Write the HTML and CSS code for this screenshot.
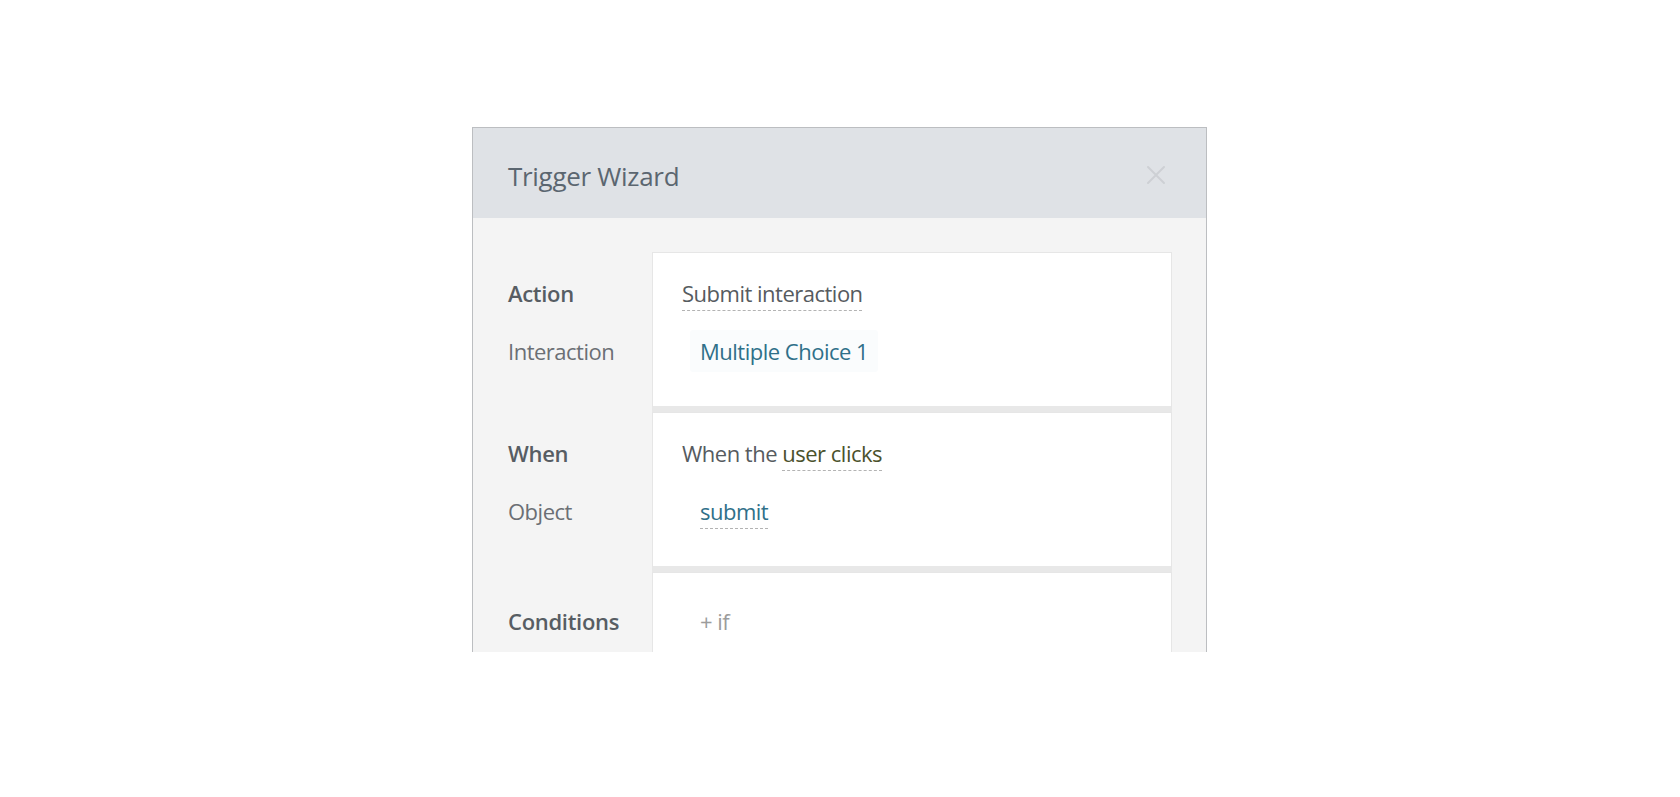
FILE: index.html
```html
<!DOCTYPE html>
<html lang="en">
<head>
<meta charset="utf-8">
<title>Trigger Wizard</title>
<link rel="stylesheet" href="styles.css">
</head>
<body>
<div class="dialog">
  <div class="dlg-header">
    <h1 class="dlg-title">Trigger Wizard</h1>
    <button class="dlg-close" aria-label="Close">
      <svg width="22" height="22" viewBox="0 0 22 22"><path d="M3 3 L19 19 M19 3 L3 19" stroke="#cdd0d4" stroke-width="2" stroke-linecap="round" fill="none"/></svg>
    </button>
  </div>
  <div class="dlg-body">
    <section class="row">
      <div class="labels">
        <div class="line label-main">Action</div>
        <div class="line label-sub">Interaction</div>
      </div>
      <div class="card">
        <div class="line"><span class="pick">Submit interaction</span></div>
        <div class="line indent"><span class="ref pill">Multiple Choice 1</span></div>
      </div>
    </section>
    <section class="row">
      <div class="labels">
        <div class="line label-main">When</div>
        <div class="line label-sub">Object</div>
      </div>
      <div class="card">
        <div class="line">When the <span class="pick event">user clicks</span></div>
        <div class="line indent"><span class="ref pick">submit</span></div>
      </div>
    </section>
    <section class="row row-cond">
      <div class="labels">
        <div class="line label-main">Conditions</div>
      </div>
      <div class="card">
        <div class="line indent"><span class="add">+ if</span></div>
      </div>
    </section>
  </div>
</div>
</body>
</html>
```
FILE: styles.css
```css
html, body {
  margin: 0;
  padding: 0;
  background: #ffffff;
}

body {
  font-family: "Open Sans", "Noto Sans", "Liberation Sans", sans-serif;
}

.dialog {
  margin: 127px 0 0 472px;
  width: 733px;
  height: 524px;
  overflow: hidden;
  border: 1px solid #bcbec1;
  border-bottom: none;
  background: #f4f4f4;
}

.dlg-header {
  height: 90px;
  background: #dfe2e6;
  display: flex;
  align-items: center;
  justify-content: space-between;
  padding: 0 39px 0 35px;
}

.dlg-title {
  margin: 0;
  padding-top: 7px;
  line-height: 83px;
  font-size: 26px;
  font-weight: 400;
  letter-spacing: -0.3px;
  color: #5b6670;
  align-self: flex-start;
}

.dlg-close {
  border: 0;
  background: none;
  padding: 0;
  margin-top: 4px;
  width: 22px;
  height: 22px;
  display: flex;
}

.dlg-body {
  padding: 34px 34px 0 0;
  display: flex;
  flex-direction: column;
}

.row {
  display: flex;
}

.labels {
  width: 144px;
  padding: 12px 0 0 35px;
  flex-shrink: 0;
}

.line {
  font-size: 22px;
  line-height: 58px;
  letter-spacing: -0.5px;
  white-space: nowrap;
  color: #565b60;
}

.label-main {
  font-weight: 600;
  color: #575d63;
  letter-spacing: -0.3px;
}

.label-sub {
  color: #6b6f74;
}

.card {
  flex: 1;
  background: #ffffff;
  border: 1px solid #e6e6e6;
  border-bottom: 6px solid #e8e8e8;
  padding: 11px 0 26px 29px;
}

.indent {
  padding-left: 18px;
}

.pick {
  text-decoration: underline dashed #b3b3b3;
  text-decoration-thickness: 1px;
  text-underline-offset: 8px;
}

.ref {
  color: #2f7089;
}

.pill {
  background: #fafcfd;
  padding: 6px 10px;
  margin-left: -10px;
  border-radius: 3px;
}

.event {
  color: #4b522c;
}

.add {
  color: #9c9c9c;
}

.row-cond .labels {
  padding-top: 20px;
}

.row-cond .card {
  padding-top: 19px;
  border-bottom: none;
}
```
